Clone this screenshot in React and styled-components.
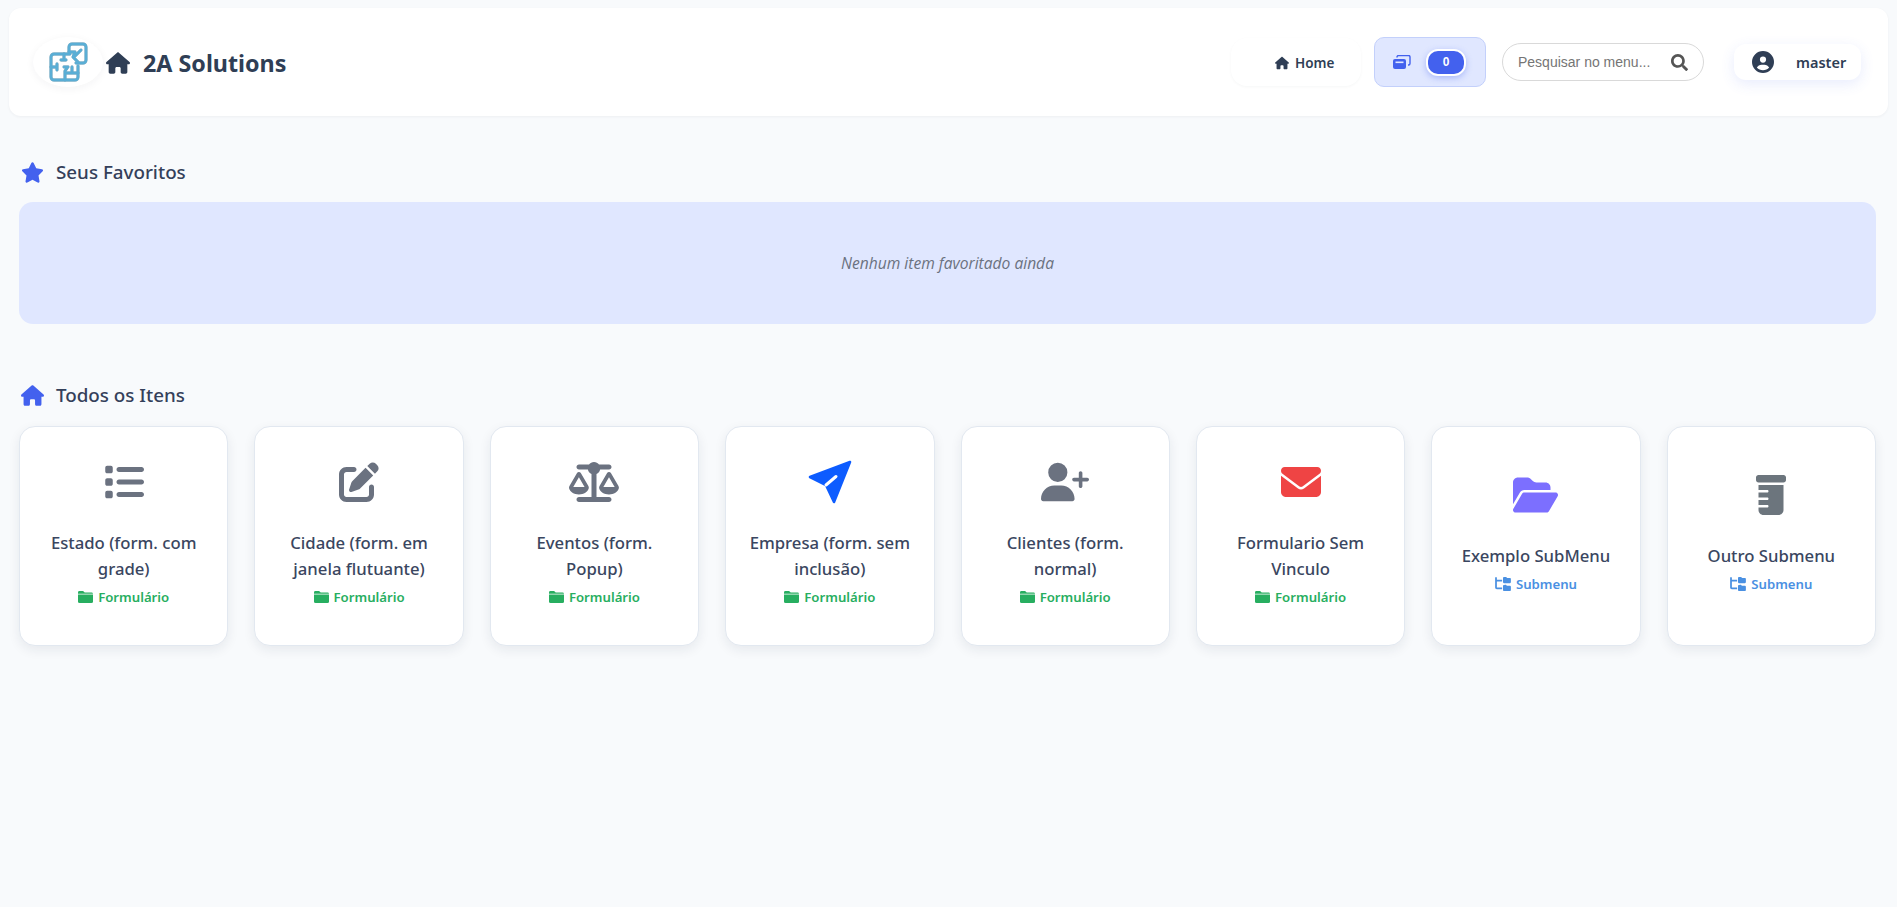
import React from "react";
import styled, { createGlobalStyle } from "styled-components";
import {
  FaStar,
  FaHouse,
  FaList,
  FaPenToSquare,
  FaScaleBalanced,
  FaUserPlus,
  FaEnvelope,
  FaFolderOpen,
  FaPrescriptionBottle,
  FaFolderTree,
  FaCircleUser,
} from "react-icons/fa6";
import { FaSearch } from "react-icons/fa";

const GlobalStyle = createGlobalStyle`
  * { box-sizing: border-box; }
  body {
    margin: 0;
    background: #f8fafc;
    font-family: "Noto Sans", "Open Sans", sans-serif;
    color: #34405a;
  }
`;

const Page = styled.div`
  min-height: 907px;
  padding: 8px 9px 0;
`;

const Header = styled.header`
  height: 108px;
  background: #fff;
  border-radius: 12px;
  box-shadow: 0 1px 3px rgba(30, 41, 59, 0.05);
  display: flex;
  align-items: center;
  padding: 0 27px 0 24px;
`;

const Brand = styled.div`
  display: flex;
  align-items: center;
  flex: 1;
`;

const LogoPill = styled.div`
  width: 70px;
  height: 50px;
  border-radius: 50%;
  background: #fff;
  box-shadow: 0 2px 8px rgba(30, 41, 59, 0.05);
  display: flex;
  align-items: center;
  justify-content: center;
  margin-right: 3px;
`;

const LogoSvg = styled.svg`
  width: 44px;
  height: 44px;
  filter: drop-shadow(0.8px 0.8px 0.7px rgba(90, 90, 90, 0.5));
`;

const BrandTitle = styled.h1`
  margin: 2px 0 0;
  display: flex;
  align-items: center;
  gap: 13px;
  font-size: 23.3px;
  font-weight: 700;
  color: #2f3e55;
  svg {
    font-size: 24px;
  }
`;

const HomeLink = styled.a`
  width: 130px;
  height: 48px;
  border-radius: 16px;
  background: #fff;
  box-shadow: 0 1px 3px rgba(30, 41, 59, 0.04);
  display: flex;
  align-items: center;
  padding: 2px 0 0 44px;
  gap: 6px;
  font-size: 13.5px;
  font-weight: 600;
  color: #2f3e55;
  svg {
    font-size: 14px;
  }
`;

const Counter = styled.div`
  width: 112px;
  height: 50px;
  margin-left: 13px;
  border-radius: 10px;
  border: 1px solid #c3d0fb;
  background: #e0e7ff;
  display: flex;
  align-items: center;
  padding-left: 18px;
  gap: 15px;
`;

const CounterIcon = styled.svg`
  width: 18px;
  height: 14px;
  fill: #4361ee;
`;

const CounterBadge = styled.span`
  width: 40px;
  height: 27px;
  border-radius: 12px;
  border: 2px solid #fff;
  background: #4361ee;
  box-shadow: 0 2px 6px rgba(67, 97, 238, 0.35);
  color: #fff;
  font-family: "Liberation Sans", Arial, sans-serif;
  font-size: 12px;
  font-weight: 700;
  display: flex;
  align-items: center;
  justify-content: center;
`;

const SearchBox = styled.div`
  width: 202px;
  height: 38px;
  margin-left: 16px;
  border-radius: 19px;
  border: 1px solid #d9d9d9;
  background: #fff;
  display: flex;
  align-items: center;
  padding: 0 15px;
  color: #555;
  font-size: 17px;
`;

const SearchInput = styled.input`
  flex: 1;
  min-width: 0;
  border: 0;
  outline: 0;
  background: none;
  padding: 0;
  font-family: "Liberation Sans", Arial, sans-serif;
  font-size: 14px;
  &::placeholder {
    color: #757575;
    opacity: 1;
  }
`;

const UserPill = styled.div`
  width: 127px;
  height: 36px;
  margin-left: 30px;
  border-radius: 12px;
  background: #fff;
  box-shadow: 0 4px 14px rgba(67, 97, 238, 0.12);
  display: flex;
  align-items: center;
  padding-left: 18px;
  gap: 22px;
  font-size: 14.5px;
  font-weight: 600;
  color: #2f3e55;
  svg {
    font-size: 22px;
  }
`;

const Section = styled.section`
  padding: 0 12px 0 10px;
`;

const SectionTitle = styled.h2`
  margin: ${(p) => p.$top}px 0 0;
  height: 28px;
  display: flex;
  align-items: center;
  padding-left: 2px;
  gap: 12px;
  font-size: 18.8px;
  font-weight: 500;
  color: #34405a;
  svg {
    color: #4361ee;
    width: 23px;
    height: 21px;
  }
`;

const EmptyBox = styled.div`
  height: 122px;
  margin-top: 16px;
  border-radius: 14px;
  background: #e0e7ff;
  display: flex;
  align-items: center;
  justify-content: center;
  font-family: "Open Sans", sans-serif;
  font-size: 15.6px;
  font-style: italic;
  color: #6b7280;
`;

const Grid = styled.div`
  margin-top: 17px;
  display: grid;
  grid-template-columns: repeat(8, 1fr);
  gap: 26px;
`;

const Card = styled.a`
  height: 220px;
  border-radius: 16px;
  border: 1px solid #e2e8f0;
  background: #fff;
  box-shadow: 0 4px 12px rgba(30, 41, 59, 0.08);
  padding: 0 20px 5px;
  display: flex;
  flex-direction: column;
  align-items: center;
  justify-content: center;
  text-align: center;
`;

const CardIcon = styled.div`
  height: 44px;
  display: flex;
  align-items: center;
  justify-content: center;
  margin-bottom: 26px;
  color: ${(p) => p.$color || "#6b7280"};
  svg {
    width: ${(p) => p.$w || 40}px;
    height: ${(p) => p.$h || 40}px;
  }
`;

const CardTitle = styled.div`
  font-size: 16.7px;
  line-height: 26px;
  font-weight: 500;
  color: #3a4660;
`;

const CardMeta = styled.div`
  margin-top: 4px;
  display: flex;
  align-items: center;
  gap: 5px;
  font-size: 13.2px;
  font-weight: 600;
  line-height: 22px;
  color: ${(p) => p.$color};
  svg {
    width: 15px;
    height: 12px;
    flex-shrink: 0;
  }
`;

const TreeWrap = styled.span`
  display: flex;
  svg {
    width: 16px;
    height: 14px;
  }
`;

// the plane on "Empresa" is not in the icon packs with this rounded notch
const SendIcon = () => (
  <svg viewBox="0 0 44 44">
    <path d="M42 2 2 17l16 8 8 17Z" fill="currentColor" stroke="currentColor" strokeWidth="2.6" strokeLinejoin="round" />
    <path d="M28 16.5 18 25" stroke="#fff" strokeWidth="3" strokeLinecap="round" />
  </svg>
);

// folder with the tab split from the body, as in the "Formulário" tag
const TagFolder = () => (
  <svg viewBox="0 0 15 12" fill="currentColor">
    <path d="M0 1.4A1.4 1.4 0 0 1 1.4 0h3.7l1.6 1.6h6.9A1.4 1.4 0 0 1 15 2.8H0Z" />
    <path d="M0 3.6h15v6.9a1.5 1.5 0 0 1-1.5 1.5h-12A1.5 1.5 0 0 1 0 10.5Z" />
  </svg>
);

const items = [
  { title: "Estado (form. com grade)", Icon: FaList },
  { title: "Cidade (form. em janela flutuante)", Icon: FaPenToSquare },
  { title: "Eventos (form. Popup)", Icon: FaScaleBalanced, w: 50 },
  { title: "Empresa (form. sem inclusão)", Icon: SendIcon, color: "#0d5cff", w: 44, h: 44 },
  { title: "Clientes (form. normal)", Icon: FaUserPlus, w: 48 },
  { title: "Formulario Sem Vinculo", Icon: FaEnvelope, color: "#ef4444" },
  { title: "Exemplo SubMenu", Icon: FaFolderOpen, color: "#7c6fff", w: 45, sub: true },
  { title: "Outro Submenu", Icon: FaPrescriptionBottle, color: "#6c757d", w: 30, sub: true },
];

const Logo = () => (
  <LogoSvg viewBox="0 0 44 44" fill="none" stroke="#5aaed5" strokeWidth="2.9" strokeLinejoin="round" strokeLinecap="round">
    <path d="M24 14H8a3 3 0 0 0-3 3v20a3 3 0 0 0 3 3h21a3 3 0 0 0 3-3V26" />
    <path d="M5 27h6M11 24v6M18 14v6M15 20h5M18 27h4M22 27l-3 4M19 31v9M19 33h13M26 27v5" />
    <path d="M23 12V7a3 3 0 0 1 3-3h11a3 3 0 0 1 3 3v13a3 3 0 0 1-3 3h-7" />
    <path d="M23 12h6l-2 5 5 5M35 10l-7 7" />
  </LogoSvg>
);

const App = () => {
  return (
    <Page>
      <GlobalStyle />
      <Header>
        <Brand>
          <LogoPill>
            <Logo />
          </LogoPill>
          <BrandTitle>
            <FaHouse />
            2A Solutions
          </BrandTitle>
        </Brand>
        <HomeLink>
          <FaHouse />
          Home
        </HomeLink>
        <Counter>
          <CounterIcon viewBox="0 0 18 14">
            <rect x="0" y="4" width="13" height="10" rx="2" />
            <rect x="2.5" y="6.5" width="8" height="1.6" fill="#e0e7ff" />
            <path d="M4 2.5V2a1.5 1.5 0 0 1 1.5-1.5h10A1.5 1.5 0 0 1 17 2v6.5A1.5 1.5 0 0 1 15.5 10H15" fill="none" stroke="#4361ee" strokeWidth="1.4" />
          </CounterIcon>
          <CounterBadge>0</CounterBadge>
        </Counter>
        <SearchBox>
          <SearchInput placeholder="Pesquisar no menu..." />
          <FaSearch />
        </SearchBox>
        <UserPill>
          <FaCircleUser />
          master
        </UserPill>
      </Header>

      <Section>
        <SectionTitle $top={42}>
          <FaStar />
          Seus Favoritos
        </SectionTitle>
        <EmptyBox>Nenhum item favoritado ainda</EmptyBox>

        <SectionTitle $top={57}>
          <FaHouse />
          Todos os Itens
        </SectionTitle>
        <Grid>
          {items.map(({ title, Icon, color, w, h, sub }) => (
            <Card key={title}>
              <CardIcon $color={color} $w={w} $h={h}>
                <Icon />
              </CardIcon>
              <CardTitle>{title}</CardTitle>
              {sub ? (
                <CardMeta $color="#4a90e2">
                  <TreeWrap>
                    <FaFolderTree />
                  </TreeWrap>
                  Submenu
                </CardMeta>
              ) : (
                <CardMeta $color="#27ae60">
                  <TagFolder />
                  Formulário
                </CardMeta>
              )}
            </Card>
          ))}
        </Grid>
      </Section>
    </Page>
  );
};

export default App;
